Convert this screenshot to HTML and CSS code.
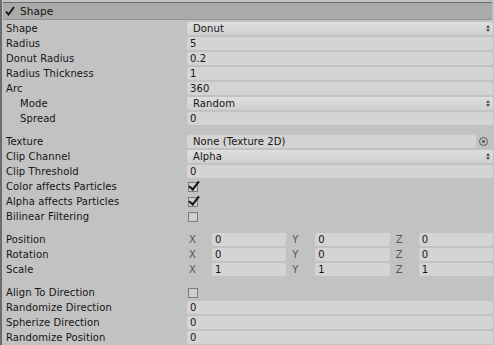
FILE: index.html
```html
<!DOCTYPE html>
<html lang="en">
<head>
    <meta charset="UTF-8">
    <title>Shape</title>
    <link rel="stylesheet" href="styles.css">
</head>
<body>
<div class="inspector">
    <!-- Cabecera del módulo -->
    <div class="header">
        <svg class="header-check" width="10" height="10" viewBox="0 0 10 10"><path d="M1 5.5 L3.5 8.5 L9 1" fill="none" stroke="#111" stroke-width="1.8"/></svg>
        <span>Shape</span>
    </div>

    <div class="section">
        <div class="row"><div class="label">Shape</div><div class="popup">Donut<span class="arrows"></span></div></div>
        <div class="row"><div class="label">Radius</div><div class="field">5</div></div>
        <div class="row"><div class="label">Donut Radius</div><div class="field">0.2</div></div>
        <div class="row"><div class="label">Radius Thickness</div><div class="field">1</div></div>
        <div class="row"><div class="label">Arc</div><div class="field">360</div></div>
        <div class="row"><div class="label sub">Mode</div><div class="popup">Random<span class="arrows"></span></div></div>
        <div class="row"><div class="label sub">Spread</div><div class="field">0</div></div>
    </div>

    <div class="section">
        <div class="row"><div class="label">Texture</div>
            <div class="object"><div class="field obj">None (Texture 2D)</div><span class="picker"></span></div>
        </div>
        <div class="row"><div class="label">Clip Channel</div><div class="popup">Alpha<span class="arrows"></span></div></div>
        <div class="row"><div class="label">Clip Threshold</div><div class="field">0</div></div>
        <div class="row"><div class="label">Color affects Particles</div><div><span class="checkbox checked"></span></div></div>
        <div class="row"><div class="label">Alpha affects Particles</div><div><span class="checkbox checked"></span></div></div>
        <div class="row"><div class="label">Bilinear Filtering</div><div><span class="checkbox"></span></div></div>
    </div>

    <div class="section">
        <div class="row"><div class="label">Position</div>
            <div class="vector">
                <div class="axis"><span>X</span><div class="field">0</div></div>
                <div class="axis"><span>Y</span><div class="field">0</div></div>
                <div class="axis"><span>Z</span><div class="field">0</div></div>
            </div>
        </div>
        <div class="row"><div class="label">Rotation</div>
            <div class="vector">
                <div class="axis"><span>X</span><div class="field">0</div></div>
                <div class="axis"><span>Y</span><div class="field">0</div></div>
                <div class="axis"><span>Z</span><div class="field">0</div></div>
            </div>
        </div>
        <div class="row"><div class="label">Scale</div>
            <div class="vector">
                <div class="axis"><span>X</span><div class="field">1</div></div>
                <div class="axis"><span>Y</span><div class="field">1</div></div>
                <div class="axis"><span>Z</span><div class="field">1</div></div>
            </div>
        </div>
    </div>

    <div class="section">
        <div class="row"><div class="label">Align To Direction</div><div><span class="checkbox"></span></div></div>
        <div class="row"><div class="label">Randomize Direction</div><div class="field">0</div></div>
        <div class="row"><div class="label">Spherize Direction</div><div class="field">0</div></div>
        <div class="row"><div class="label">Randomize Position</div><div class="field">0</div></div>
    </div>
</div>
</body>
</html>
```

FILE: styles.css
```css
body {
    margin: 0;
    padding: 0;
    background: #c2c2c2;
    font-family: "DejaVu Sans", sans-serif;
    font-size: 10px;
    letter-spacing: 0.1px;
    color: #151515;
    overflow: hidden;
}
.inspector {
    width: 493px;
    height: 345px;
    border-left: 2px solid #6c6c6c;
    padding-top: 2px;
    box-sizing: border-box;
}
/* Cabecera */
.header {
    height: 16px;
    margin: 0 1px 1px 1px;
    border-top: 1px solid #6e6e6e;
    border-bottom: 1px solid #959595;
    background: #aaaaaa;
    display: flex;
    align-items: center;
    padding-left: 2px;
    font-size: 10.5px;
}
.header-check {
    margin-right: 5px;
}
/* Filas */
.section {
    margin-bottom: 8px;
}
.row {
    display: grid;
    grid-template-columns: 185px 1fr;
    height: 15px;
    align-items: center;
}
.label {
    padding-left: 4px;
    white-space: nowrap;
}
.label.sub {
    padding-left: 18px;
}
.field {
    height: 13px;
    line-height: 13px;
    background: #d4d4d4;
    border-radius: 2px;
    padding-left: 3px;
}
.popup {
    position: relative;
    height: 13px;
    line-height: 13px;
    background: linear-gradient(#dedede, #d0d0d0);
    border-radius: 2px;
    padding-left: 6px;
}
.arrows {
    position: absolute;
    right: 5px;
    top: 3px;
    width: 0;
    height: 7px;
}
.arrows::before,
.arrows::after {
    content: "";
    position: absolute;
    left: -2px;
    border-left: 2px solid transparent;
    border-right: 2px solid transparent;
}
.arrows::before {
    top: 0;
    border-bottom: 3px solid #555;
}
.arrows::after {
    top: 4px;
    border-top: 3px solid #555;
}
.object {
    display: flex;
    align-items: center;
}
.field.obj {
    flex: 1;
    padding-left: 6px;
}
.picker {
    width: 7px;
    height: 7px;
    border: 1px solid #555;
    border-radius: 50%;
    margin: 0 5px 0 3px;
    position: relative;
}
.picker::after {
    content: "";
    position: absolute;
    left: 2px;
    top: 2px;
    width: 3px;
    height: 3px;
    border-radius: 50%;
    background: #555;
}
.checkbox {
    display: block;
    width: 8px;
    height: 8px;
    margin-left: 1px;
    border: 1px solid #7a7a7a;
    background: #cfcfcf;
    position: relative;
}
.checkbox.checked::after {
    content: "";
    position: absolute;
    left: 2px;
    top: -4px;
    width: 4px;
    height: 9px;
    border-right: 2px solid #111;
    border-bottom: 2px solid #111;
    transform: rotate(38deg);
}
/* Vectores */
.vector {
    display: grid;
    grid-template-columns: 1fr 1fr 1fr;
    gap: 4px;
}
.axis {
    display: grid;
    grid-template-columns: 25px 1fr;
    align-items: center;
}
.axis span {
    color: #555;
    padding-left: 2px;
}
```
